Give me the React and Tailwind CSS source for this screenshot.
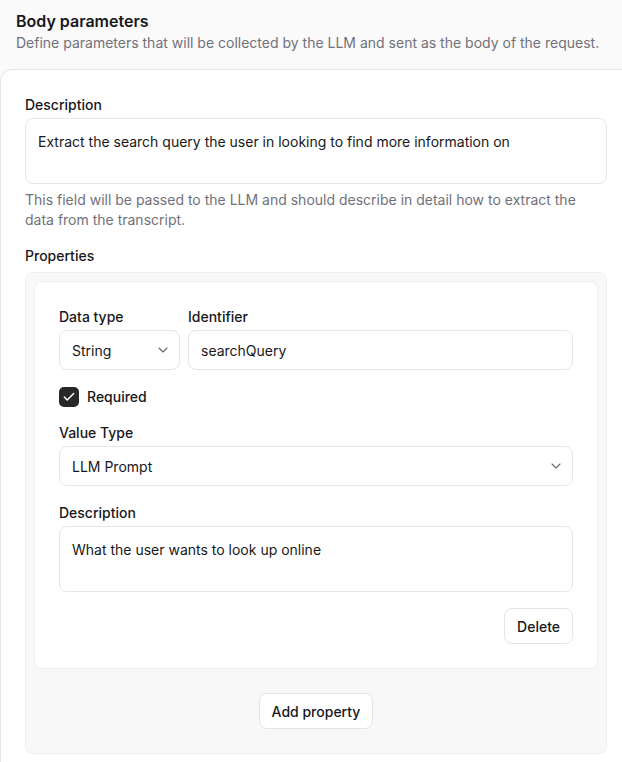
import React from 'react';
import { ChevronDown, Check } from 'lucide-react';

const Label = ({ children }) => (
    <div className="text-sm font-medium leading-5 text-[#18181b] mb-[3px]">{children}</div>
);

const SelectBox = ({ value, className = '' }) => (
    <div className={`h-10 flex items-center justify-between pl-3 pr-2 bg-white border border-[#e6e6e8] rounded-lg text-sm text-[#18181b] ${className}`}>
        <span className="pt-[2px]">{value}</span>
        <ChevronDown size={16} strokeWidth={1.75} className="text-[#6b6b70]" />
    </div>
);

const TextArea = ({ value }) => (
    <div className="h-[66px] px-3 pt-[13px] pb-[11px] bg-white border border-[#e6e6e8] rounded-lg text-sm leading-5 text-[#18181b]">
        {value}
    </div>
);

const Button = ({ children }) => (
    <button className="h-9 px-3 pt-px bg-white border border-[#e4e4e7] rounded-lg text-sm font-medium text-[#18181b]">
        {children}
    </button>
);

export default function App() {
    return (
        <div className="min-h-[762px] bg-[#fafafa] overflow-hidden" style={{ fontFamily: 'Inter, "Noto Sans", sans-serif' }}>
            <div className="px-4 pt-[9px] pb-4">
                <h2 className="text-base font-semibold leading-6 text-[#18181b]">Body parameters</h2>
                <p className="text-sm leading-5 text-[#71717a]">
                    Define parameters that will be collected by the LLM and sent as the body of the request.
                </p>
            </div>

            <div className="w-[640px] bg-white border border-[#e4e4e7] rounded-tl-xl px-6 pt-[25px] pb-10">
                <div className="w-[582px]">
                    <Label>Description</Label>
                    <TextArea value="Extract the search query the user in looking to find more information on" />
                    <p className="mt-[6px] text-sm leading-5 text-[#71717a]">
                        This field will be passed to the LLM and should describe in detail how to extract the data from the transcript.
                    </p>

                    <div className="mt-4 mb-[6px] text-sm font-medium leading-5 text-[#18181b]">Properties</div>

                    <div className="bg-[#f8f8f8] border border-[#efefef] rounded-lg p-2 pb-6">
                        <div className="bg-white border border-[#f0f0f0] rounded-lg p-6 pt-[25px]">
                            <div className="flex gap-2">
                                <div className="w-[121px]">
                                    <Label>Data type</Label>
                                    <SelectBox value="String" />
                                </div>
                                <div className="flex-1">
                                    <Label>Identifier</Label>
                                    <div className="h-10 flex items-center px-3 pt-[2px] bg-white border border-[#e6e6e8] rounded-lg text-sm text-[#18181b]">
                                        searchQuery
                                    </div>
                                </div>
                            </div>

                            <div className="mt-[17px] flex items-center gap-2">
                                <div className="w-5 h-5 rounded-[5px] bg-[#27272a] flex items-center justify-center">
                                    <Check size={14} strokeWidth={2.5} className="text-white" />
                                </div>
                                <span className="text-sm font-medium text-[#18181b]">Required</span>
                            </div>

                            <div className="mt-4">
                                <Label>Value Type</Label>
                                <SelectBox value="LLM Prompt" />
                            </div>

                            <div className="mt-[17px]">
                                <Label>Description</Label>
                                <TextArea value="What the user wants to look up online" />
                            </div>

                            <div className="mt-4 flex justify-end">
                                <Button>Delete</Button>
                            </div>
                        </div>

                        <div className="mt-6 flex justify-center">
                            <Button>Add property</Button>
                        </div>
                    </div>
                </div>
            </div>
        </div>
    );
}
